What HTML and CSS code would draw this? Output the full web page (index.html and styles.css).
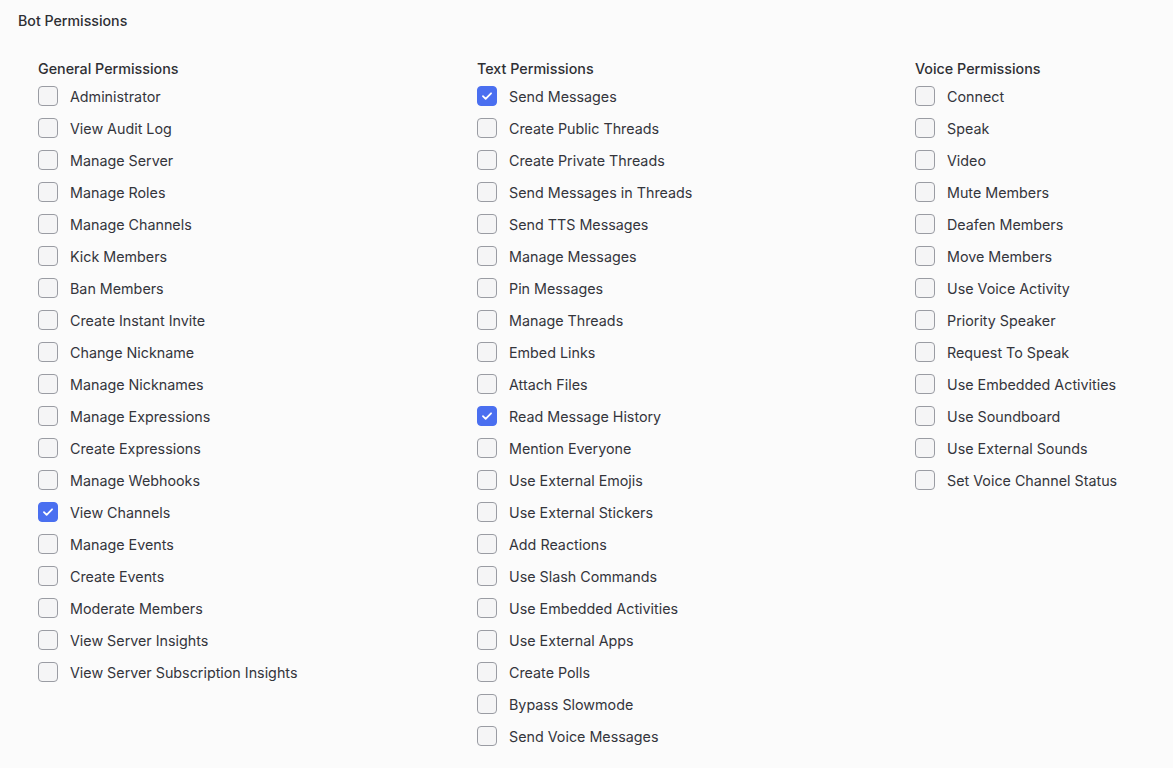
FILE: index.html
```html
<!DOCTYPE html>
<html>
<head>
<meta charset="utf-8">
<link rel="stylesheet" href="styles.css">
</head>
<body>
<div class="page">
  <h1 class="title">Bot Permissions</h1>
  <div class="columns">
    <section class="group">
      <h2 class="group-title">General Permissions</h2>
      <label class="row"><span class="box"></span><span class="label">Administrator</span></label>
      <label class="row"><span class="box"></span><span class="label">View Audit Log</span></label>
      <label class="row"><span class="box"></span><span class="label">Manage Server</span></label>
      <label class="row"><span class="box"></span><span class="label">Manage Roles</span></label>
      <label class="row"><span class="box"></span><span class="label">Manage Channels</span></label>
      <label class="row"><span class="box"></span><span class="label">Kick Members</span></label>
      <label class="row"><span class="box"></span><span class="label">Ban Members</span></label>
      <label class="row"><span class="box"></span><span class="label">Create Instant Invite</span></label>
      <label class="row"><span class="box"></span><span class="label">Change Nickname</span></label>
      <label class="row"><span class="box"></span><span class="label">Manage Nicknames</span></label>
      <label class="row"><span class="box"></span><span class="label">Manage Expressions</span></label>
      <label class="row"><span class="box"></span><span class="label">Create Expressions</span></label>
      <label class="row"><span class="box"></span><span class="label">Manage Webhooks</span></label>
      <label class="row"><span class="box checked"><svg viewBox="0 0 20 20"><path d="M5.5 10.2l3 3 6-6.2" /></svg></span><span class="label">View Channels</span></label>
      <label class="row"><span class="box"></span><span class="label">Manage Events</span></label>
      <label class="row"><span class="box"></span><span class="label">Create Events</span></label>
      <label class="row"><span class="box"></span><span class="label">Moderate Members</span></label>
      <label class="row"><span class="box"></span><span class="label">View Server Insights</span></label>
      <label class="row"><span class="box"></span><span class="label">View Server Subscription Insights</span></label>
    </section>
    <section class="group">
      <h2 class="group-title">Text Permissions</h2>
      <label class="row"><span class="box checked"><svg viewBox="0 0 20 20"><path d="M5.5 10.2l3 3 6-6.2" /></svg></span><span class="label">Send Messages</span></label>
      <label class="row"><span class="box"></span><span class="label">Create Public Threads</span></label>
      <label class="row"><span class="box"></span><span class="label">Create Private Threads</span></label>
      <label class="row"><span class="box"></span><span class="label">Send Messages in Threads</span></label>
      <label class="row"><span class="box"></span><span class="label">Send TTS Messages</span></label>
      <label class="row"><span class="box"></span><span class="label">Manage Messages</span></label>
      <label class="row"><span class="box"></span><span class="label">Pin Messages</span></label>
      <label class="row"><span class="box"></span><span class="label">Manage Threads</span></label>
      <label class="row"><span class="box"></span><span class="label">Embed Links</span></label>
      <label class="row"><span class="box"></span><span class="label">Attach Files</span></label>
      <label class="row"><span class="box checked"><svg viewBox="0 0 20 20"><path d="M5.5 10.2l3 3 6-6.2" /></svg></span><span class="label">Read Message History</span></label>
      <label class="row"><span class="box"></span><span class="label">Mention Everyone</span></label>
      <label class="row"><span class="box"></span><span class="label">Use External Emojis</span></label>
      <label class="row"><span class="box"></span><span class="label">Use External Stickers</span></label>
      <label class="row"><span class="box"></span><span class="label">Add Reactions</span></label>
      <label class="row"><span class="box"></span><span class="label">Use Slash Commands</span></label>
      <label class="row"><span class="box"></span><span class="label">Use Embedded Activities</span></label>
      <label class="row"><span class="box"></span><span class="label">Use External Apps</span></label>
      <label class="row"><span class="box"></span><span class="label">Create Polls</span></label>
      <label class="row"><span class="box"></span><span class="label">Bypass Slowmode</span></label>
      <label class="row"><span class="box"></span><span class="label">Send Voice Messages</span></label>
    </section>
    <section class="group">
      <h2 class="group-title">Voice Permissions</h2>
      <label class="row"><span class="box"></span><span class="label">Connect</span></label>
      <label class="row"><span class="box"></span><span class="label">Speak</span></label>
      <label class="row"><span class="box"></span><span class="label">Video</span></label>
      <label class="row"><span class="box"></span><span class="label">Mute Members</span></label>
      <label class="row"><span class="box"></span><span class="label">Deafen Members</span></label>
      <label class="row"><span class="box"></span><span class="label">Move Members</span></label>
      <label class="row"><span class="box"></span><span class="label">Use Voice Activity</span></label>
      <label class="row"><span class="box"></span><span class="label">Priority Speaker</span></label>
      <label class="row"><span class="box"></span><span class="label">Request To Speak</span></label>
      <label class="row"><span class="box"></span><span class="label">Use Embedded Activities</span></label>
      <label class="row"><span class="box"></span><span class="label">Use Soundboard</span></label>
      <label class="row"><span class="box"></span><span class="label">Use External Sounds</span></label>
      <label class="row"><span class="box"></span><span class="label">Set Voice Channel Status</span></label>
    </section>
  </div>
</div>
</body>
</html>
```

FILE: styles.css
```css
html, body {
  margin: 0;
  padding: 0;
  background: #fbfbfb;
}
body {
  font-family: Inter, "Noto Sans", "Liberation Sans", sans-serif;
  color: #323339;
  overflow: hidden;
}
.page {
  padding: 11px 0 0 18px;
}
.title {
  margin: 0;
  font-size: 14.2px;
  line-height: 20px;
  font-weight: 500;
  color: #2e2f34;
}
.columns {
  display: grid;
  grid-template-columns: 439px 438px 1fr;
  padding: 28px 0 0 20px;
}
.group {
  display: flex;
  flex-direction: column;
}
.group-title {
  margin: 0;
  font-size: 14.3px;
  line-height: 20px;
  height: 21px;
  font-weight: 500;
  color: #2e2f34;
}
.row {
  display: flex;
  align-items: center;
  gap: 12px;
  height: 32px;
  font-size: 14.3px;
}
.box {
  box-sizing: border-box;
  width: 20px;
  height: 20px;
  border: 1px solid #9a9ca3;
  border-radius: 4px;
  background: #f5f5f6;
  flex: none;
  display: flex;
}
.box.checked {
  background: #4a6ff0;
  border-color: #4a6ff0;
}
.box svg {
  width: 18px;
  height: 18px;
  fill: none;
  stroke: #ffffff;
  stroke-width: 2;
  stroke-linecap: round;
  stroke-linejoin: round;
}
.label {
  color: #34353b;
  white-space: nowrap;
}
```
